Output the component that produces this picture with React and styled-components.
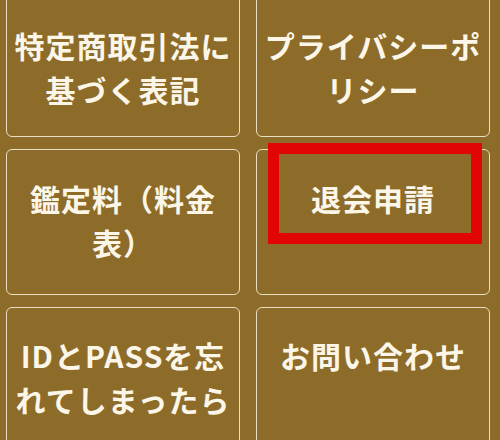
import React from "react"
import styled, { createGlobalStyle } from "styled-components"

const GlobalStyle = createGlobalStyle`
  html, body {
    margin: 0;
    padding: 0;
    background: #8d6b28;
    overflow: hidden;
  }
  body {
    font-family: "Noto Sans CJK JP", "Noto Sans", sans-serif;
  }
`

const Page = styled.div`
  width: 500px;
  height: 440px;
  overflow: hidden;
  background: #8d6b28;
`

const Grid = styled.div`
  display: grid;
  grid-template-columns: 234px 234px;
  grid-auto-rows: 146px;
  column-gap: 16px;
  row-gap: 12px;
  padding: 0 10px 0 6px;
  margin-top: -9px;
`

const Card = styled.a`
  position: relative;
  box-sizing: border-box;
  display: block;
  border: 1.5px solid #eadfc2;
  border-radius: 6px;
  padding: ${props => props.$pad || "29px"} 4px 0;
  text-align: center;
  text-decoration: none;
  color: #fbf6e8;
  font-size: 30px;
  font-weight: 700;
  line-height: 44px;
  letter-spacing: 1px;
  cursor: pointer;
`

const Highlight = styled.span`
  position: absolute;
  left: 11px;
  top: -7px;
  width: 214px;
  height: 101px;
  box-sizing: border-box;
  border: 11px solid #e10505;
  pointer-events: none;
`

const items = [
  { label: "特定商取引法に基づく表記", pad: "31px" },
  { label: "プライバシーポリシー", pad: "31px" },
  { label: "鑑定料（料金表）", pad: "26px" },
  { label: "退会申請", pad: "26px", marked: true },
  { label: "IDとPASSを忘れてしまったら", pad: "25px" },
  { label: "お問い合わせ", pad: "25px" },
]

const App = () => {
  return (
    <Page>
      <GlobalStyle />
      <Grid>
        {items.map(item => (
          <Card key={item.label} $pad={item.pad}>
            {item.label}
            {item.marked && <Highlight />}
          </Card>
        ))}
      </Grid>
    </Page>
  )
}

export default App
